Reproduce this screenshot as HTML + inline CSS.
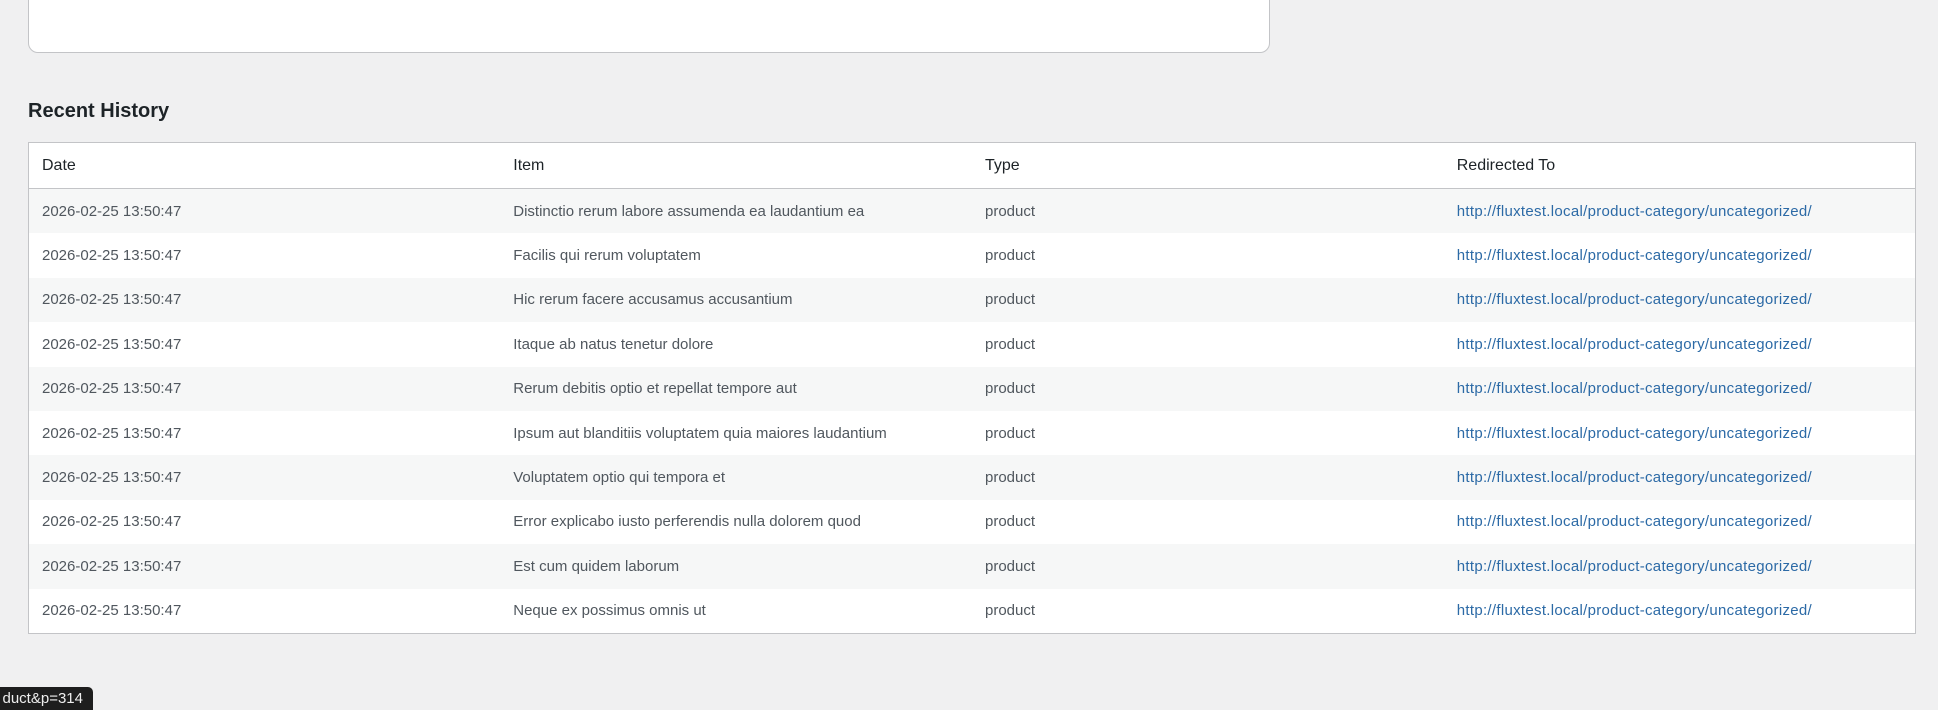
<!DOCTYPE html>
<html><head><meta charset="utf-8"><style>
body{margin:0;width:1938px;height:710px;background:#f0f0f1;font-family:"Liberation Sans",sans-serif;position:relative;overflow:hidden}
.card{position:absolute;left:28px;top:-20px;width:1240px;height:71px;background:#fff;border:1px solid #c3c4c7;border-radius:10px}
h2{position:absolute;left:28px;top:100px;margin:0;font-size:20px;font-weight:600;color:#1d2327}
table{position:absolute;left:28px;top:142px;width:1888px;border-collapse:collapse;background:#fff;border:1px solid #c3c4c7;table-layout:fixed}
th{height:45px;text-align:left;font-weight:normal;font-size:16px;color:#1d2327;padding:0 0 0 13px;border-bottom:1px solid #c3c4c7}
td{height:44.4px;padding:0 0 0 13px;font-size:15px;color:#50575e}
tr:nth-child(odd) td{background:#f6f7f7}
td a{color:#2c6aa6;text-decoration:none;letter-spacing:0.3px}
.tip{position:absolute;left:0;top:687px;width:93px;height:23px;background:#1e1e1e;color:#eee;font-size:15px;line-height:23px;border-radius:0 5px 0 0;overflow:hidden;white-space:nowrap}
.tip span{position:absolute;right:10px}
</style></head><body>
<div class="card"></div>
<h2>Recent History</h2>
<table>
<thead><tr><th>Date</th><th>Item</th><th>Type</th><th>Redirected To</th></tr></thead>
<tbody>
<tr><td>2026-02-25 13:50:47</td><td>Distinctio rerum labore assumenda ea laudantium ea</td><td>product</td><td><a>http://fluxtest.local/product-category/uncategorized/</a></td></tr>
<tr><td>2026-02-25 13:50:47</td><td>Facilis qui rerum voluptatem</td><td>product</td><td><a>http://fluxtest.local/product-category/uncategorized/</a></td></tr>
<tr><td>2026-02-25 13:50:47</td><td>Hic rerum facere accusamus accusantium</td><td>product</td><td><a>http://fluxtest.local/product-category/uncategorized/</a></td></tr>
<tr><td>2026-02-25 13:50:47</td><td>Itaque ab natus tenetur dolore</td><td>product</td><td><a>http://fluxtest.local/product-category/uncategorized/</a></td></tr>
<tr><td>2026-02-25 13:50:47</td><td>Rerum debitis optio et repellat tempore aut</td><td>product</td><td><a>http://fluxtest.local/product-category/uncategorized/</a></td></tr>
<tr><td>2026-02-25 13:50:47</td><td>Ipsum aut blanditiis voluptatem quia maiores laudantium</td><td>product</td><td><a>http://fluxtest.local/product-category/uncategorized/</a></td></tr>
<tr><td>2026-02-25 13:50:47</td><td>Voluptatem optio qui tempora et</td><td>product</td><td><a>http://fluxtest.local/product-category/uncategorized/</a></td></tr>
<tr><td>2026-02-25 13:50:47</td><td>Error explicabo iusto perferendis nulla dolorem quod</td><td>product</td><td><a>http://fluxtest.local/product-category/uncategorized/</a></td></tr>
<tr><td>2026-02-25 13:50:47</td><td>Est cum quidem laborum</td><td>product</td><td><a>http://fluxtest.local/product-category/uncategorized/</a></td></tr>
<tr><td>2026-02-25 13:50:47</td><td>Neque ex possimus omnis ut</td><td>product</td><td><a>http://fluxtest.local/product-category/uncategorized/</a></td></tr>
</tbody></table>
<div class="tip"><span>duct&amp;p=314</span></div>
</body></html>
